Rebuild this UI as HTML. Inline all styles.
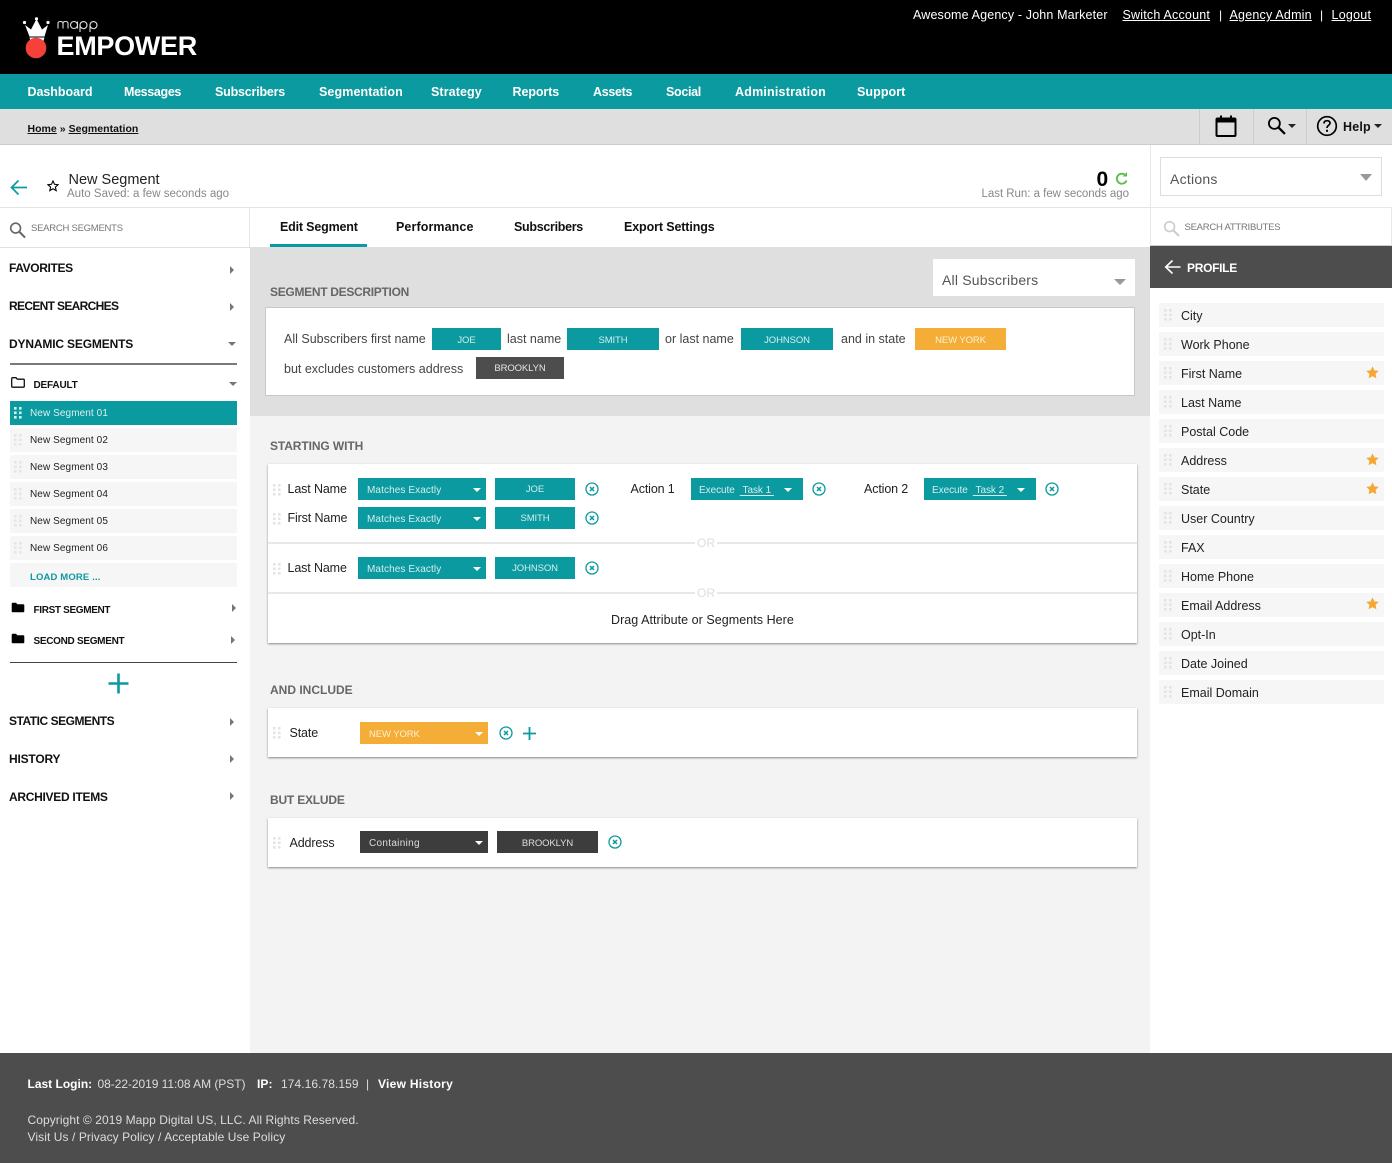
<!DOCTYPE html>
<html lang="en"><head><meta charset="utf-8"><title>Mapp Empower - Segmentation</title>
<style>
*{box-sizing:border-box}
html,body{margin:0;padding:0}
body{width:1392px;height:1163px;position:relative;overflow:hidden;background:#fff;font-family:"Liberation Sans",sans-serif;color:#222}
.b{position:absolute}
.t{position:absolute;white-space:nowrap;line-height:20px;height:20px;font-size:13px;letter-spacing:.2px;color:#222}
.w{color:#fff}.bd{font-weight:700}
.nav{font-weight:700;font-size:12.5px;color:#fff;top:82px}
.sh{font-weight:700;font-size:12px;color:#111}
.h{font-weight:700;font-size:12px;color:#666}
.chip{position:absolute;height:22px;line-height:24px;text-align:center;font-size:9.5px;color:#d5eeef;letter-spacing:-.1px;background:#0b9aa0}
.sel{position:absolute;height:22px;line-height:25px;font-size:10px;color:#d5eeef;letter-spacing:.1px;background:#0b9aa0;padding-left:9px;white-space:nowrap}
.sel u{text-underline-offset:2px;margin-left:5px}
.sel:after{content:"";position:absolute;right:5px;top:10px;border:4px solid transparent;border-top:4px solid #fff;border-bottom:0}
.sel.a:after{right:11px}
.li{position:absolute;left:10px;width:227px;height:24px;background:#f6f6f6}
.ri{position:absolute;left:1159px;width:225px;height:24px;background:#f6f6f6}
.s{position:absolute;left:30px;font-size:10px;letter-spacing:.09px;line-height:24px;color:#222;white-space:nowrap}
.ra{position:absolute;left:1181px;font-size:12.5px;letter-spacing:0;line-height:24px;color:#222;white-space:nowrap}
.tri-r{position:absolute;width:0;height:0;border-left:4px solid #777;border-top:4px solid transparent;border-bottom:4px solid transparent}
.tri-d{position:absolute;width:0;height:0;border-top:4px solid #777;border-left:4px solid transparent;border-right:4px solid transparent}
.card{position:absolute;background:#fff;box-shadow:0 1px 2px rgba(0,0,0,.45)}
.g{position:absolute;width:8px;height:14px}
.lb{font-size:12.5px;letter-spacing:-.13px}
.ds{font-size:12.5px;letter-spacing:0;color:#444}
.foot{font-size:12px;color:#ddd;letter-spacing:.07px}
</style></head><body>
<svg width="0" height="0" style="position:absolute"><defs>
<symbol id="grip" viewBox="0 0 8 14"><g><rect x="0" y="1" width="2.6" height="2.6"/><rect x="5" y="1" width="2.6" height="2.6"/><rect x="0" y="5.5" width="2.6" height="2.6"/><rect x="5" y="5.5" width="2.6" height="2.6"/><rect x="0" y="10" width="2.6" height="2.6"/><rect x="5" y="10" width="2.6" height="2.6"/></g></symbol>
<symbol id="x" viewBox="0 0 14 14"><circle cx="7" cy="7" r="6" fill="none" stroke="#0b9aa0" stroke-width="1.3"/><path d="M5 5l4 4M9 5l-4 4" stroke="#0b9aa0" stroke-width="1.5" fill="none"/></symbol>
<symbol id="star" viewBox="0 0 12 12"><path d="M6 .3l1.750 3.700 4 .5-2.900 2.800.7 4-3.550-1.950-3.550 1.950.7-4-2.900-2.800 4-.5z" fill="#f4a833"/></symbol>
<symbol id="mag" viewBox="0 0 18 18"><circle cx="7" cy="7" r="5.200" fill="none" stroke="currentColor" stroke-width="1.700"/><path d="M11 11l6 6" stroke="currentColor" stroke-width="2.200"/></symbol>
<symbol id="fold" viewBox="0 0 14 11"><path d="M.7 1.800Q.7 .7 1.800 .7H5l1.300 1.500h6q1 0 1 1v6q0 1-1 1H1.700q-1 0-1-1z"/></symbol>
</defs></svg>

<!-- header -->
<div class="b" style="left:0;top:0;width:1392px;height:74px;background:#000"></div>
<svg class="b" style="left:21px;top:17px" width="30" height="42" viewBox="0 0 30 42">
<path d="M4 8L8.500 19.500H23.500L27 8 21 12.500 15.500 2 10 12.500z" fill="#fff"/><path d="M8.500 20.500H23.500L22.500 24C18 22.500 13 22.500 9.500 24z" fill="#fff"/>
<circle cx="3.500" cy="5.500" r="1.600" fill="#fff"/><circle cx="27" cy="5.500" r="1.600" fill="#fff"/><circle cx="15.500" cy="1.800" r="1.600" fill="#fff"/>
<circle cx="15" cy="31" r="10.300" fill="#f5413a"/></svg>
<svg class="b" style="left:57px;top:18px" width="42" height="15" viewBox="0 0 42 15" fill="none" stroke="#ddd" stroke-width="1.100"><path d="M1 10.500V5.500Q1 3.500 3.500 3.500T6 5.500V10.500M6 5.500Q6 3.500 8.500 3.500T11 5.500V10.500"/><path d="M20.500 3.500v7M20.500 7a3.500 3.500 0 1 1-7 0 3.500 3.500 0 1 1 7 0"/><path d="M23 14V7a3.500 3.500 0 1 1 0 .2M33 14V7a3.500 3.500 0 1 1 0 .2"/></svg>
<div class="t w bd" style="left:56.500px;top:31px;font-size:27px;line-height:30px;height:30px;letter-spacing:-.3px">EMPOWER</div>
<div class="t w" style="left:913px;top:5px;font-size:12.500px;letter-spacing:.15px">Awesome Agency - John Marketer</div>
<div class="t w" style="left:1122.500px;top:5px;font-size:12.500px;letter-spacing:.2px"><u>Switch Account</u></div>
<div class="t w" style="left:1219px;top:5px;font-size:12px">|</div>
<div class="t w" style="left:1229.500px;top:5px;font-size:12.500px;letter-spacing:.2px"><u>Agency Admin</u></div>
<div class="t w" style="left:1320px;top:5px;font-size:12px">|</div>
<div class="t w" style="left:1331.500px;top:5px;font-size:12.500px;letter-spacing:.25px"><u>Logout</u></div>

<!-- nav -->
<div class="b" style="left:0;top:74px;width:1392px;height:35px;background:#0b9aa0"></div>
<div class="t nav" style="left:27.500px;letter-spacing:-.04px">Dashboard</div>
<div class="t nav" style="left:124px;letter-spacing:-.34px">Messages</div>
<div class="t nav" style="left:215px;letter-spacing:-.2px">Subscribers</div>
<div class="t nav" style="left:319px;letter-spacing:.1px">Segmentation</div>
<div class="t nav" style="left:431px;letter-spacing:.1px">Strategy</div>
<div class="t nav" style="left:512.500px;letter-spacing:-.08px">Reports</div>
<div class="t nav" style="left:593px;letter-spacing:-.32px">Assets</div>
<div class="t nav" style="left:666px;letter-spacing:-.32px">Social</div>
<div class="t nav" style="left:735px;letter-spacing:.2px">Administration</div>
<div class="t nav" style="left:857px;letter-spacing:.07px">Support</div>

<!-- breadcrumb -->
<div class="b" style="left:0;top:109px;width:1392px;height:36px;background:#e0dfe0;border-bottom:1px solid #ccc"></div>
<div class="t bd" style="left:27.500px;top:118.500px;font-size:10.500px;letter-spacing:.03px;color:#111"><u>Home</u> » <u>Segmentation</u></div>
<div class="b" style="left:1199px;top:109px;width:1px;height:35px;background:#ccc"></div>
<div class="b" style="left:1253px;top:109px;width:1px;height:35px;background:#ccc"></div>
<div class="b" style="left:1306px;top:109px;width:1px;height:35px;background:#ccc"></div>
<svg class="b" style="left:1215px;top:114px" width="22" height="24" viewBox="0 0 22 24"><rect x="1.500" y="4.500" width="19" height="17.500" rx="1" fill="none" stroke="#000" stroke-width="2"/><rect x="1.500" y="4" width="19" height="4.500" fill="#000"/><rect x="5" y="1.500" width="2" height="4" fill="#000"/><rect x="15" y="1.500" width="2" height="4" fill="#000"/></svg>
<svg class="b" style="left:1267px;top:116px;color:#000" width="19" height="19"><use href="#mag"/></svg>
<div class="tri-d" style="left:1288px;top:124px;border-top-color:#222"></div>
<svg class="b" style="left:1316px;top:115px" width="22" height="22" viewBox="0 0 22 22"><circle cx="11" cy="11" r="9.300" fill="none" stroke="#000" stroke-width="1.700"/><path d="M8 8.500Q8 5.700 11 5.700T14 8.300C14 10.300 11 10.300 11 13" fill="none" stroke="#000" stroke-width="1.700"/><rect x="10" y="14.800" width="2" height="2" fill="#000"/></svg>
<div class="t bd" style="left:1343px;top:116.500px;font-size:12.500px;color:#111">Help</div>
<div class="tri-d" style="left:1374px;top:124px;border-top-color:#222"></div>

<!-- title row -->
<svg class="b" style="left:10px;top:179px" width="18" height="17" viewBox="0 0 18 17"><path d="M17 8.500H2M8.500 1.500L1.500 8.500l7 7" fill="none" stroke="#0b9aa0" stroke-width="1.700"/></svg>
<svg class="b" style="left:47px;top:180px" width="12" height="12" viewBox="0 0 12 12"><path d="M6 1l1.500 3.300 3.600.4-2.700 2.400.8 3.500L6 8.800 2.800 10.600l.8-3.500L.9 4.700l3.600-.4z" fill="none" stroke="#000" stroke-width="1.100"/></svg>
<div class="t" style="left:68.500px;top:170px;font-size:14.500px;letter-spacing:0;color:#222">New Segment</div>
<div class="t" style="left:67px;top:183.500px;font-size:11.500px;letter-spacing:.01px;color:#888">Auto Saved: a few seconds ago</div>
<div class="t bd" style="left:1096.500px;top:170px;font-size:21px;color:#000;letter-spacing:0">0</div>
<svg class="b" style="left:1114px;top:171px" width="15" height="15" viewBox="0 0 15 15"><path d="M11.500 4.300A5 5 0 1 0 12.500 9.500" fill="none" stroke="#5cbf4a" stroke-width="1.900"/><path d="M8.500 5.500h4.500V1z" fill="#5cbf4a"/></svg>
<div class="t" style="left:981.500px;top:184px;font-size:11.500px;letter-spacing:-.03px;color:#888">Last Run: a few seconds ago</div>
<div class="b" style="left:0;top:207px;width:1150px;height:1px;background:#e4e4e4"></div>
<div class="b" style="left:1150px;top:145px;width:1px;height:102px;background:#e8e8e8"></div>
<div class="b" style="left:1160px;top:157px;width:222px;height:39px;border:1px solid #ddd;background:#fff"></div>
<div class="t" style="left:1170px;top:169px;font-size:14px;color:#555;letter-spacing:.25px">Actions</div>
<div class="tri-d" style="left:1360px;top:174px;border-top:7px solid #999;border-left-width:6px;border-right-width:6px"></div>

<!-- left sidebar head -->
<div class="b" style="left:249px;top:207px;width:1px;height:41px;background:#e6e6e6"></div>
<div class="b" style="left:0;top:247px;width:250px;height:1px;background:#e0e0e0"></div>
<svg class="b" style="left:9px;top:221px;color:#666" width="17" height="18"><use href="#mag"/></svg>
<div class="t" style="left:31px;top:219px;font-size:9.500px;color:#777;letter-spacing:-.25px">SEARCH SEGMENTS</div>

<!-- tabs -->
<div class="t bd" style="left:280px;top:216.500px;font-size:12.500px;color:#111;letter-spacing:-.18px">Edit Segment</div>
<div class="t bd" style="left:396px;top:216.500px;font-size:12.500px;color:#111;letter-spacing:.1px">Performance</div>
<div class="t bd" style="left:514px;top:216.500px;font-size:12.500px;color:#111;letter-spacing:-.3px">Subscribers</div>
<div class="t bd" style="left:624px;top:216.500px;font-size:12.500px;color:#111;letter-spacing:-.12px">Export Settings</div>
<div class="b" style="left:270px;top:244px;width:97px;height:3px;background:#0b9aa0"></div>

<!-- centre background -->
<div class="b" style="left:250px;top:247px;width:900px;height:169px;background:#e0dfe0"></div>
<div class="b" style="left:250px;top:416px;width:900px;height:637px;background:#f3f3f3"></div>

<!-- right search -->
<div class="b" style="left:1150px;top:207px;width:242px;height:39px;border:1px solid #e8e8e8;border-bottom:1px solid #ccc;background:#fff"></div>
<svg class="b" style="left:1163px;top:220px;color:#ccc" width="17" height="17"><use href="#mag"/></svg>
<div class="t" style="left:1184.500px;top:218px;font-size:9.500px;color:#777;letter-spacing:-.25px">SEARCH ATTRIBUTES</div>
<div class="b" style="left:1150px;top:246px;width:242px;height:42px;background:#4d4d4d"></div>
<svg class="b" style="left:1164px;top:259px" width="17" height="16" viewBox="0 0 17 16"><path d="M16.500 8H2M8.500 1.500L1.700 8l6.800 6.500" fill="none" stroke="#fff" stroke-width="1.600"/></svg>
<div class="t bd w" style="left:1187px;top:257.500px;font-size:12px;letter-spacing:-.3px">PROFILE</div>

<!-- left nav -->
<div class="t sh" style="left:9px;top:258px;letter-spacing:-.38px">FAVORITES</div><div class="tri-r" style="left:230px;top:266px"></div>
<div class="t sh" style="left:9px;top:296px;letter-spacing:-.67px">RECENT SEARCHES</div><div class="tri-r" style="left:230px;top:303px"></div>
<div class="t sh" style="left:9px;top:334px;letter-spacing:-.16px">DYNAMIC SEGMENTS</div><div class="tri-d" style="left:228px;top:342px"></div>
<div class="b" style="left:10px;top:363px;width:227px;height:2px;background:#7a7a7a"></div>
<svg class="b" style="left:11px;top:377px" width="14" height="11" viewBox="0 0 14 11"><path d="M.7 1.800Q.7 .7 1.800 .7H5l1.300 1.500h6q1 0 1 1v6q0 1-1 1H1.700q-1 0-1-1z" fill="none" stroke="#111" stroke-width="1.300"/></svg>
<div class="t bd" style="left:33.500px;top:376px;font-size:10px;color:#111;letter-spacing:-.18px">DEFAULT</div>
<div class="tri-d" style="left:229px;top:382px"></div>
<div class="li" style="top:401px;background:#0b9aa0"></div>
<svg class="g" style="left:14px;top:406px;fill:#d8f0f0"><use href="#grip"/></svg><div class="s" style="top:402px;color:#d8f0f0">New Segment 01</div>
<div class="li" style="top:428px"></div><svg class="g" style="left:14px;top:433px;fill:#e6e6e6"><use href="#grip"/></svg><div class="s" style="top:429px">New Segment 02</div>
<div class="li" style="top:455px"></div><svg class="g" style="left:14px;top:460px;fill:#e6e6e6"><use href="#grip"/></svg><div class="s" style="top:456px">New Segment 03</div>
<div class="li" style="top:482px"></div><svg class="g" style="left:14px;top:487px;fill:#e6e6e6"><use href="#grip"/></svg><div class="s" style="top:483px">New Segment 04</div>
<div class="li" style="top:509px"></div><svg class="g" style="left:14px;top:514px;fill:#e6e6e6"><use href="#grip"/></svg><div class="s" style="top:510px">New Segment 05</div>
<div class="li" style="top:536px"></div><svg class="g" style="left:14px;top:541px;fill:#e6e6e6"><use href="#grip"/></svg><div class="s" style="top:537px">New Segment 06</div>
<div class="li" style="top:563px"></div><div class="s" style="top:566px;font-weight:700;color:#0b9aa0;font-size:9.500px;letter-spacing:.15px">LOAD MORE ...</div>
<svg class="b" style="left:11px;top:602px;fill:#000" width="14" height="11"><use href="#fold"/></svg>
<div class="t bd" style="left:33.500px;top:601px;font-size:10px;color:#111;letter-spacing:-.34px">FIRST SEGMENT</div><div class="tri-r" style="left:232px;top:604px"></div>
<svg class="b" style="left:11px;top:633px;fill:#000" width="14" height="11"><use href="#fold"/></svg>
<div class="t bd" style="left:33.500px;top:632px;font-size:10px;color:#111;letter-spacing:-.3px">SECOND SEGMENT</div><div class="tri-r" style="left:231px;top:636px"></div>
<div class="b" style="left:10px;top:662px;width:227px;height:1px;background:#444"></div>
<svg class="b" style="left:108px;top:673px" width="21" height="21" viewBox="0 0 21 21"><path d="M10.500 .5v20M.5 10.500h20" stroke="#0b9aa0" stroke-width="2.600" fill="none"/></svg>
<div class="t sh" style="left:9px;top:711px;letter-spacing:-.47px">STATIC SEGMENTS</div><div class="tri-r" style="left:230px;top:718px"></div>
<div class="t sh" style="left:9px;top:749px;letter-spacing:-.2px">HISTORY</div><div class="tri-r" style="left:230px;top:755px"></div>
<div class="t sh" style="left:9px;top:787px;letter-spacing:-.29px">ARCHIVED ITEMS</div><div class="tri-r" style="left:230px;top:792px"></div>

<!-- segment description -->
<div class="b" style="left:933px;top:259px;width:202px;height:37px;background:#fff"></div>
<div class="t" style="left:942px;top:270px;font-size:14px;color:#555;letter-spacing:.2px">All Subscribers</div>
<div class="tri-d" style="left:1114px;top:279px;border-top:6px solid #999;border-left-width:6px;border-right-width:6px"></div>
<div class="t h" style="left:270px;top:281.500px;letter-spacing:-.3px">SEGMENT DESCRIPTION</div>
<div class="b" style="left:265px;top:307px;width:870px;height:89px;background:#fff;border:1px solid #c8c8c8"></div>
<div class="t ds" style="left:284px;top:329px">All Subscribers first name</div>
<div class="chip" style="left:432px;top:328px;width:69px;line-height:25px">JOE</div>
<div class="t ds" style="left:507px;top:329px">last name</div>
<div class="chip" style="left:567px;top:328px;width:92px;line-height:25px">SMITH</div>
<div class="t ds" style="left:665px;top:329px">or last name</div>
<div class="chip" style="left:741px;top:328px;width:92px;line-height:25px">JOHNSON</div>
<div class="t ds" style="left:841px;top:329px">and in state</div>
<div class="chip" style="left:915px;top:328px;width:91px;background:#f4ad37;color:#fdf0d5;line-height:25px">NEW YORK</div>
<div class="t ds" style="left:284px;top:359px">but excludes customers address</div>
<div class="chip" style="left:476px;top:357px;width:88px;background:#4d4d4d;color:#e4e4e4;line-height:23px">BROOKLYN</div>

<!-- starting with -->
<div class="t h" style="left:270px;top:435.500px;letter-spacing:-.1px">STARTING WITH</div>
<div class="card" style="left:268px;top:464px;width:869px;height:179px"></div>
<svg class="g" style="left:273px;top:483px;fill:#e4e4e4"><use href="#grip"/></svg>
<div class="t lb" style="left:287.500px;top:479px">Last Name</div>
<div class="sel" style="left:358px;top:478px;width:128px">Matches Exactly</div>
<div class="chip" style="left:495px;top:478px;width:80px">JOE</div>
<svg class="b" style="left:585px;top:482px" width="14" height="14"><use href="#x"/></svg>
<div class="t lb" style="left:630.500px;top:479px">Action 1</div>
<div class="sel a" style="left:691px;top:478px;width:112px;padding-left:8px;letter-spacing:-.05px">Execute<u>&nbsp;Task 1&nbsp;</u></div>
<svg class="b" style="left:812px;top:482px" width="14" height="14"><use href="#x"/></svg>
<div class="t lb" style="left:864px;top:479px">Action 2</div>
<div class="sel a" style="left:924px;top:478px;width:112px;padding-left:8px;letter-spacing:-.05px">Execute<u>&nbsp;Task 2&nbsp;</u></div>
<svg class="b" style="left:1045px;top:482px" width="14" height="14"><use href="#x"/></svg>

<svg class="g" style="left:273px;top:512px;fill:#e4e4e4"><use href="#grip"/></svg>
<div class="t lb" style="left:287.500px;top:508px">First Name</div>
<div class="sel" style="left:358px;top:507px;width:128px">Matches Exactly</div>
<div class="chip" style="left:495px;top:507px;width:80px">SMITH</div>
<svg class="b" style="left:585px;top:511px" width="14" height="14"><use href="#x"/></svg>

<div class="b" style="left:268px;top:542px;width:869px;height:2px;background:#e8e8e8"></div>
<div class="t" style="left:695px;top:533px;width:22px;background:#fff;text-align:center;color:#ddd;font-size:12px;letter-spacing:0">OR</div>

<svg class="g" style="left:273px;top:562px;fill:#e4e4e4"><use href="#grip"/></svg>
<div class="t lb" style="left:287.500px;top:558px">Last Name</div>
<div class="sel" style="left:358px;top:557px;width:128px">Matches Exactly</div>
<div class="chip" style="left:495px;top:557px;width:80px">JOHNSON</div>
<svg class="b" style="left:585px;top:561px" width="14" height="14"><use href="#x"/></svg>

<div class="b" style="left:268px;top:592px;width:869px;height:2px;background:#e8e8e8"></div>
<div class="t" style="left:695px;top:583px;width:22px;background:#fff;text-align:center;color:#ddd;font-size:12px;letter-spacing:0">OR</div>
<div class="t lb" style="left:611px;top:610px;letter-spacing:.05px">Drag Attribute or Segments Here</div>

<!-- and include -->
<div class="t h" style="left:270px;top:679.500px;letter-spacing:0">AND INCLUDE</div>
<div class="card" style="left:268px;top:708px;width:869px;height:49px"></div>
<svg class="g" style="left:273px;top:726px;fill:#e4e4e4"><use href="#grip"/></svg>
<div class="t lb" style="left:289.500px;top:723px">State</div>
<div class="sel" style="left:360px;top:722px;width:128px;background:#f4ad37;color:#fdf0d5;font-size:9.500px;letter-spacing:-.1px">NEW YORK</div>
<svg class="b" style="left:499px;top:726px" width="14" height="14"><use href="#x"/></svg>
<svg class="b" style="left:523px;top:727px" width="13" height="13" viewBox="0 0 13 13"><path d="M6.500 0v13M0 6.500h13" stroke="#0b9aa0" stroke-width="1.800" fill="none"/></svg>

<!-- but exclude -->
<div class="t h" style="left:270px;top:789.500px;letter-spacing:-.2px">BUT EXLUDE</div>
<div class="card" style="left:268px;top:818px;width:869px;height:49px"></div>
<svg class="g" style="left:273px;top:836px;fill:#e4e4e4"><use href="#grip"/></svg>
<div class="t lb" style="left:289.500px;top:833px">Address</div>
<div class="sel" style="left:360px;top:831px;width:128px;background:#3d3d3d;color:#ddd;letter-spacing:.3px;line-height:26px">Containing</div>
<div class="chip" style="left:497px;top:831px;width:101px;background:#3d3d3d;color:#ddd;line-height:26px">BROOKLYN</div>
<svg class="b" style="left:608px;top:835px" width="14" height="14"><use href="#x"/></svg>

<!-- right list -->
<div class="ri" style="top:303px"></div><svg class="g" style="left:1164px;top:308px;fill:#e4e4e4"><use href="#grip"/></svg><div class="ra" style="top:304px">City</div>
<div class="ri" style="top:332px"></div><svg class="g" style="left:1164px;top:337px;fill:#e4e4e4"><use href="#grip"/></svg><div class="ra" style="top:333px">Work Phone</div>
<div class="ri" style="top:361px"></div><svg class="g" style="left:1164px;top:366px;fill:#e4e4e4"><use href="#grip"/></svg><div class="ra" style="top:362px">First Name</div><svg class="b" style="left:1365.500px;top:366px" width="13" height="13"><use href="#star"/></svg>
<div class="ri" style="top:390px"></div><svg class="g" style="left:1164px;top:395px;fill:#e4e4e4"><use href="#grip"/></svg><div class="ra" style="top:391px">Last Name</div>
<div class="ri" style="top:419px"></div><svg class="g" style="left:1164px;top:424px;fill:#e4e4e4"><use href="#grip"/></svg><div class="ra" style="top:420px">Postal Code</div>
<div class="ri" style="top:448px"></div><svg class="g" style="left:1164px;top:453px;fill:#e4e4e4"><use href="#grip"/></svg><div class="ra" style="top:449px">Address</div><svg class="b" style="left:1365.500px;top:453px" width="13" height="13"><use href="#star"/></svg>
<div class="ri" style="top:477px"></div><svg class="g" style="left:1164px;top:482px;fill:#e4e4e4"><use href="#grip"/></svg><div class="ra" style="top:478px">State</div><svg class="b" style="left:1365.500px;top:482px" width="13" height="13"><use href="#star"/></svg>
<div class="ri" style="top:506px"></div><svg class="g" style="left:1164px;top:511px;fill:#e4e4e4"><use href="#grip"/></svg><div class="ra" style="top:507px">User Country</div>
<div class="ri" style="top:535px"></div><svg class="g" style="left:1164px;top:540px;fill:#e4e4e4"><use href="#grip"/></svg><div class="ra" style="top:536px">FAX</div>
<div class="ri" style="top:564px"></div><svg class="g" style="left:1164px;top:569px;fill:#e4e4e4"><use href="#grip"/></svg><div class="ra" style="top:565px">Home Phone</div>
<div class="ri" style="top:593px"></div><svg class="g" style="left:1164px;top:598px;fill:#e4e4e4"><use href="#grip"/></svg><div class="ra" style="top:594px">Email Address</div><svg class="b" style="left:1365.500px;top:597px" width="13" height="13"><use href="#star"/></svg>
<div class="ri" style="top:622px"></div><svg class="g" style="left:1164px;top:627px;fill:#e4e4e4"><use href="#grip"/></svg><div class="ra" style="top:623px">Opt-In</div>
<div class="ri" style="top:651px"></div><svg class="g" style="left:1164px;top:656px;fill:#e4e4e4"><use href="#grip"/></svg><div class="ra" style="top:652px">Date Joined</div>
<div class="ri" style="top:680px"></div><svg class="g" style="left:1164px;top:685px;fill:#e4e4e4"><use href="#grip"/></svg><div class="ra" style="top:681px">Email Domain</div>

<!-- footer -->
<div class="b" style="left:0;top:1053px;width:1392px;height:110px;background:#4d4d4d"></div>
<div class="t foot bd" style="left:27.500px;top:1073.500px;color:#fff;letter-spacing:0">Last Login:</div>
<div class="t foot" style="left:97.500px;top:1073.500px;letter-spacing:-.05px">08-22-2019 11:08 AM (PST)</div>
<div class="t foot bd" style="left:257px;top:1073.500px;color:#fff">IP:</div>
<div class="t foot" style="left:281px;top:1073.500px">174.16.78.159</div>
<div class="t foot" style="left:366px;top:1073.500px">|</div>
<div class="t foot bd" style="left:378px;top:1073.500px;color:#fff;letter-spacing:.27px">View History</div>
<div class="t foot" style="left:27.500px;top:1109.500px;letter-spacing:.07px">Copyright © 2019 Mapp Digital US, LLC. All Rights Reserved.</div>
<div class="t foot" style="left:27.500px;top:1126.500px;letter-spacing:.08px">Visit Us / Privacy Policy / Acceptable Use Policy</div>
</body></html>
